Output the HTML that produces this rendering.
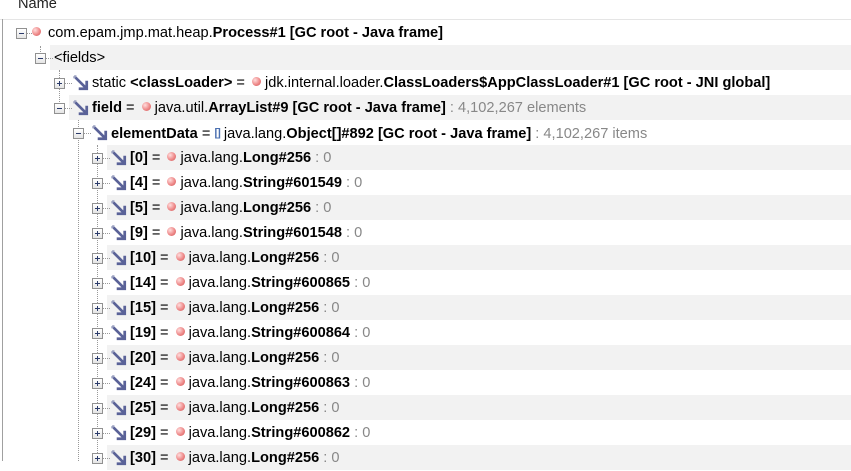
<!DOCTYPE html>
<html><head><meta charset="utf-8"><style>
body{margin:0;width:851px;height:461px;overflow:hidden;background:#fff;font-family:"Liberation Sans",sans-serif;font-size:14.6px;color:#000;position:relative}
.hdr{position:absolute;left:0;top:0;width:851px;height:19px;border-bottom:1px solid #e5e5e5}
.hdr span{position:absolute;left:18px;top:-4px;font-size:14.6px;color:#222}
.lb{position:absolute;left:2px;top:19px;width:1px;height:442px;background:#a0a0a0}
.row{position:absolute;height:25px;right:0;white-space:nowrap;line-height:25px}
.t{padding-top:1px}
.sh{background:#f2f2f2}
.exp{position:absolute;width:11px;height:11px;border:1px solid #919191;background:linear-gradient(#fff,#e4e4e4);box-sizing:border-box}
.exp:before{content:"";position:absolute;left:2px;top:4px;width:5px;height:1px;background:#2a3a6a}
.exp.p:after{content:"";position:absolute;left:4px;top:2px;width:1px;height:5px;background:#2a3a6a}
.dh{position:absolute;height:0;border-top:1px dotted #999;width:7px}
.dv{position:absolute;width:0;border-left:1px dotted #999}
.dot{display:inline-block;width:9px;height:9px;border-radius:50%;background:radial-gradient(circle at 35% 35%,#fdd,#e88 55%,#c55);margin:0 4px 0 3px;vertical-align:1px}
.arr{position:absolute;width:16px;height:16px}
b{font-weight:bold}
.g{color:#888}
.br{color:#4a6fb0;font-size:11px;font-weight:bold;vertical-align:2px;letter-spacing:-1px}
</style></head><body>
<div class="hdr"><span>Name</span></div>
<div class="lb"></div>
<div class="dv" style="left:40px;top:46px;height:14px"></div>
<div class="dv" style="left:59px;top:70px;height:38px"></div>
<div class="dv" style="left:78px;top:120px;height:341px"></div>
<div class="dv" style="left:97px;top:145px;height:316px"></div>
<svg width="0" height="0" style="position:absolute"><defs><g id="a"><path d="M2 2 L11 11 M5 12 L12 12 L12 5" stroke="#5a6298" stroke-width="2.4" fill="none"/><path d="M1 1 L3 1 M1 1 L1 3" stroke="#9aa0c0" stroke-width="1.5" fill="none"/></g></defs></svg>
<div id="rows"></div>
<script>
var rows=[
[16,48,'<span class="dot" style="margin-left:-16px;margin-right:7px"></span>com.epam.jmp.mat.heap.<b>Process#1 [GC root - Java frame]</b>',0,0,'m'],
[35,54,'&lt;fields&gt;',1,0,'m'],
[54,92,'static <b>&lt;classLoader&gt;</b> = <span class="dot"></span>jdk.internal.loader.<b>ClassLoaders$AppClassLoader#1 [GC root - JNI global]</b>',0,1,'p'],
[54,92,'<b>field</b> = <span class="dot"></span>java.util.<b>ArrayList#9 [GC root - Java frame]</b> <span class="g">: 4,102,267 elements</span>',1,1,'m'],
[73,111,'<b>elementData</b> = <span class="br">[]</span> java.lang.<b>Object[]#892 [GC root - Java frame]</b> <span class="g">: 4,102,267 items</span>',0,1,'m']];
var kids=[['0','Long#256'],['4','String#601549'],['5','Long#256'],['9','String#601548'],['10','Long#256'],['14','String#600865'],['15','Long#256'],['19','String#600864'],['20','Long#256'],['24','String#600863'],['25','Long#256'],['29','String#600862'],['30','Long#256']];
kids.forEach(function(k,i){rows.push([92,130,'<b>['+k[0]+']</b> = <span class="dot"></span>java.lang.<b>'+k[1]+'</b> <span class="g">: 0</span>',i%2==0,1,'p'])});
var h='';
rows.forEach(function(r,i){var top=20+25*i;var ex=r[0],tx=r[1];
if(r[3])h+='<div class="row sh" style="top:'+top+'px;left:'+(ex+15)+'px"></div>';
h+='<div class="exp '+r[5]+'" style="left:'+ex+'px;top:'+(top+8)+'px"></div>';
h+='<div class="dh" style="left:'+(ex+11)+'px;top:'+(top+13)+'px"></div>';
if(r[4]){h+='<svg class="arr" style="left:'+(ex+19)+'px;top:'+(top+5)+'px" viewBox="0 0 14 14"><use href="#a"/></svg>';}
h+='<div class="row t" style="top:'+top+'px;left:'+tx+'px">'+r[2]+'</div>';
});
document.getElementById('rows').innerHTML=h;
</script>
</body></html>
